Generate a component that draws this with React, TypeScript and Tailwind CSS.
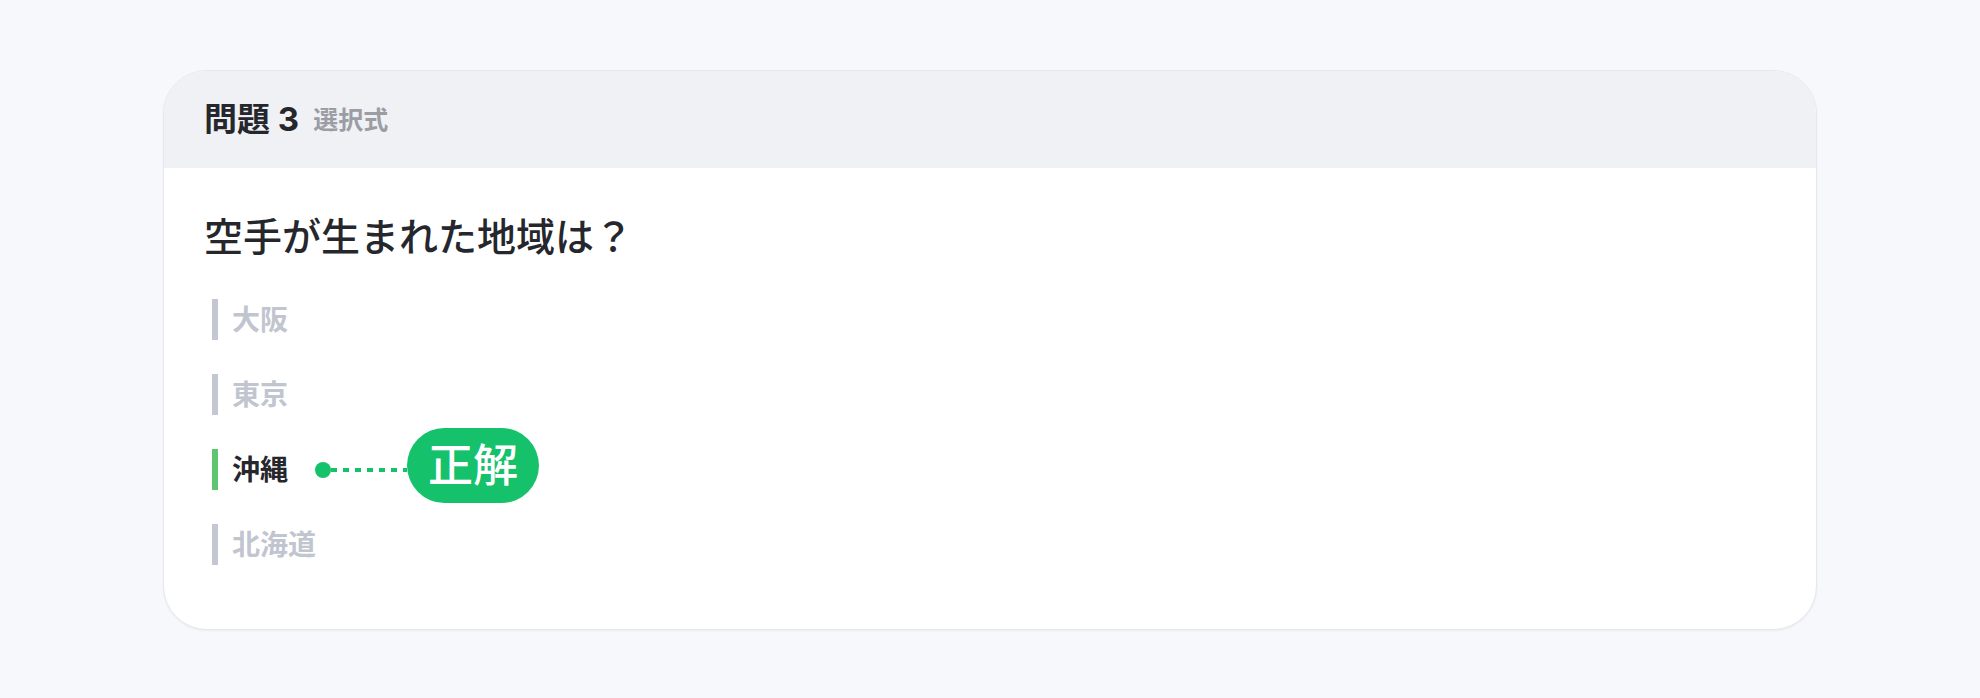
import React from "react";

const font = { fontFamily: "Inter, 'Noto Sans CJK JP', 'Noto Sans', sans-serif" };

type Opt = { label: string; correct?: boolean };
const options: Opt[] = [
  { label: "大阪" },
  { label: "東京" },
  { label: "沖縄", correct: true },
  { label: "北海道" },
];

export default function App() {
  return (
    <div className="min-h-[698px] w-full bg-[#f7f8fb] pt-[70px] px-[163px]" style={font}>
      <div className="w-full rounded-[44px] border border-[#e7e8ee] bg-white overflow-hidden shadow-[0_1px_2px_rgba(30,40,70,0.06)]">
        <div className="h-[97px] bg-[#f0f1f5] flex items-center px-[40px] gap-[14px]">
          <span className="text-[33px] font-bold text-[#26272c] leading-none">問題 3</span>
          <span className="text-[25px] font-semibold text-[#9b9da4] leading-none mt-[2px]">選択式</span>
        </div>
        <div className="pt-[45px] pb-[47px] px-[40px]">
          <div className="text-[39px] leading-[48px] font-medium text-[#26272c]">空手が生まれた地域は？</div>
          <div className="mt-[21px] flex flex-col pl-[8px]">
            {options.map((o) => (
              <div key={o.label} className="h-[75px] flex items-center">
                <div className={o.correct ? "w-[6px] h-[41px] bg-[#5ec570]" : "w-[6px] h-[41px] bg-[#c3c7d1]"} />
                <span
                  className={
                    o.correct
                      ? "ml-[14px] text-[28px] font-bold text-[#26272c] leading-none"
                      : "ml-[14px] text-[28px] font-bold text-[#c1c5cf] leading-none"
                  }
                >
                  {o.label}
                </span>
                {o.correct && (
                  <div className="flex items-center ml-[27px]">
                    <svg width="92" height="16" viewBox="0 0 92 16" className="block">
                      <circle cx="8" cy="8" r="8" fill="#14c26a" />
                      <line x1="16" y1="8" x2="92" y2="8" stroke="#14c26a" strokeWidth="4" strokeDasharray="6 6" />
                    </svg>
                    <div className="h-[75px] px-[21px] rounded-full bg-[#15c26b] flex items-center justify-center -mt-[8px]">
                      <span className="text-[45px] font-medium text-white leading-none">正解</span>
                    </div>
                  </div>
                )}
              </div>
            ))}
          </div>
        </div>
      </div>
    </div>
  );
}
